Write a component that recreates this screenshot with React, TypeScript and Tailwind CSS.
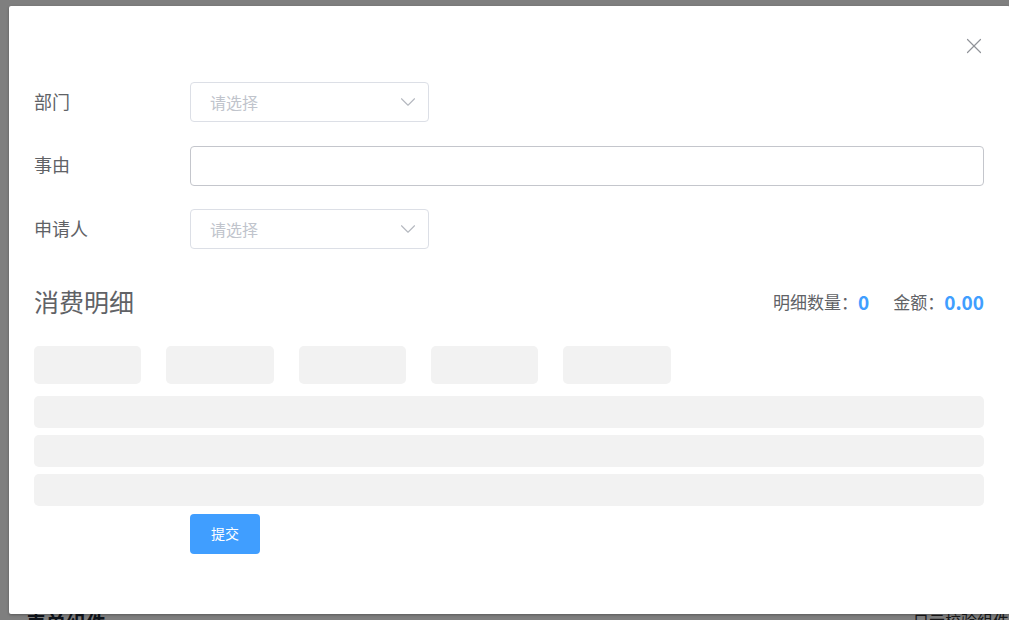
import { X, ChevronDown } from "lucide-react";

const font = { fontFamily: '"Noto Sans CJK SC", "Noto Sans", sans-serif' };

function SelectBox() {
  return (
    <div className="flex h-[40px] w-[239px] items-center justify-between rounded-[4px] border border-[#dcdfe6] bg-white pl-[19px] pr-[7px]">
      <span className="text-[16px] text-[#c0c4cc]">请选择</span>
      <ChevronDown className="h-[26px] w-[26px] text-[#b4b8bf]" strokeWidth={1} />
    </div>
  );
}

function FormRow({ label, children }: { label: string; children: React.ReactNode }) {
  return (
    <div className="flex h-[40px] items-center">
      <div className="w-[156px] shrink-0 pb-[2px] text-[18px] text-[#606266]">{label}</div>
      <div className="flex-1">{children}</div>
    </div>
  );
}

export default function App() {
  return (
    <div className="relative h-[620px] w-full overflow-hidden bg-white" style={font}>
      {/* page behind the dialog */}
      <div className="flex justify-between pl-[26px] pr-[0px] pt-[608px]">
        <div className="text-[20px] font-bold text-[#1f2937]">表单组件</div>
        <div className="text-[16px] text-[#303133]">只示校验组件</div>
      </div>

      {/* overlay */}
      <div className="absolute inset-0 bg-black/50" />

      {/* dialog */}
      <div className="absolute left-[9px] top-[6px] h-[608px] w-[1001px] rounded-[2px] bg-white shadow-[0_1px_3px_rgba(0,0,0,0.3)]">
        <div className="flex h-[76px] justify-end pr-[23px] pt-[27px]">
          <X className="h-[26px] w-[26px] text-[#909399]" strokeWidth={1.1} />
        </div>

        <div className="pl-[25px] pr-[26px]">
          <div className="flex flex-col gap-[23.5px]">
            <FormRow label="部门">
              <SelectBox />
            </FormRow>
            <FormRow label="事由">
              <div className="h-[40px] w-full rounded-[4px] border border-[#c4c6cc] bg-white" />
            </FormRow>
            <FormRow label="申请人">
              <SelectBox />
            </FormRow>
          </div>

          <div className="mt-[34px] flex items-center justify-between">
            <h2 className="text-[25px] text-[#606266]">消费明细</h2>
            <div className="flex items-center text-[17px] text-[#606266]">
              <span>明细数量：</span>
              <span className="text-[19px] font-bold text-[#409eff]">0</span>
              <span className="ml-[24px]">金额：</span>
              <span className="text-[19px] font-bold text-[#409eff]">0.00</span>
            </div>
          </div>

          <div className="mt-[25px] flex gap-[25px]">
            <div className="h-[38px] w-[107px] rounded-[5px] bg-[#f2f2f2]" />
            <div className="h-[38px] w-[108px] rounded-[5px] bg-[#f2f2f2]" />
            <div className="h-[38px] w-[107px] rounded-[5px] bg-[#f2f2f2]" />
            <div className="h-[38px] w-[107px] rounded-[5px] bg-[#f2f2f2]" />
            <div className="h-[38px] w-[108px] rounded-[5px] bg-[#f2f2f2]" />
          </div>

          <div className="mt-[12px] flex flex-col gap-[7px]">
            <div className="h-[32px] w-full rounded-[5px] bg-[#f2f2f2]" />
            <div className="h-[32px] w-full rounded-[5px] bg-[#f2f2f2]" />
            <div className="h-[32px] w-full rounded-[5px] bg-[#f2f2f2]" />
          </div>

          <div className="mt-[8px] pl-[156px]">
            <button className="flex h-[40px] w-[70px] items-center justify-center rounded-[4px] bg-[#409eff] text-[14px] text-white">
              提交
            </button>
          </div>
        </div>
      </div>
    </div>
  );
}
